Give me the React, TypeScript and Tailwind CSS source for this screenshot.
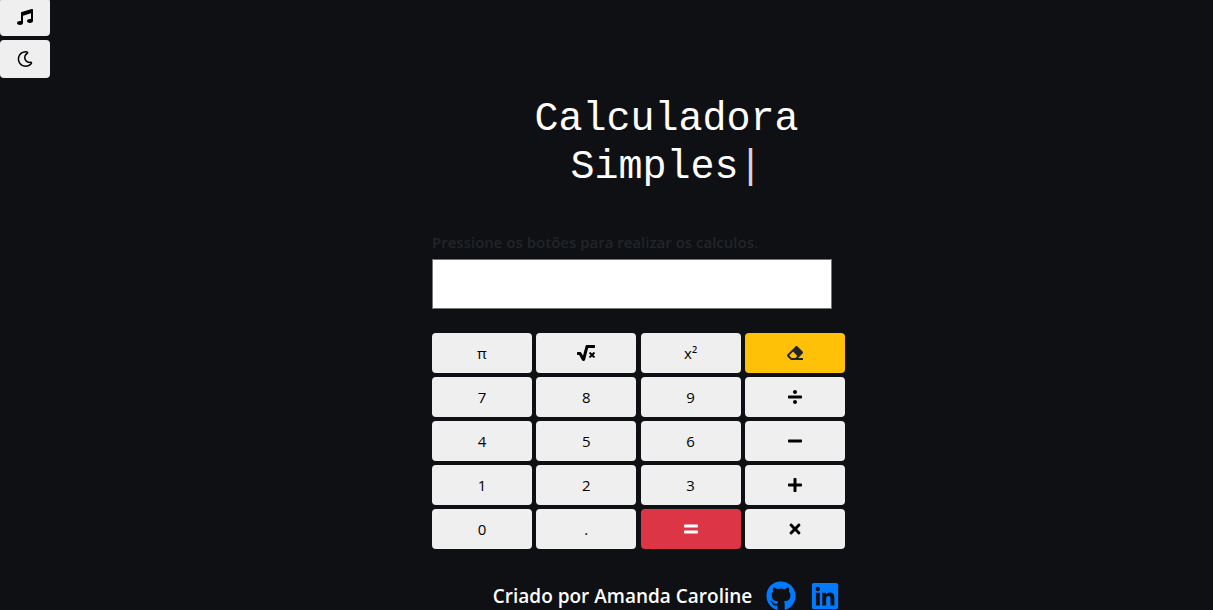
import React, { useState } from "react";
import type { ReactNode } from "react";
import {
  FaDivide,
  FaEquals,
  FaEraser,
  FaGithub,
  FaLinkedin,
  FaMinus,
  FaMusic,
  FaPlus,
  FaRegMoon,
  FaSquareRootAlt,
  FaTimes,
} from "react-icons/fa";

type Key = { id: string; label: string; face: ReactNode; tone?: "clear" | "equals" };

const keys: Key[] = [
  { id: "π", label: "Pi", face: "π" },
  { id: "√", label: "Raiz quadrada", face: <FaSquareRootAlt className="size-[18px]" /> },
  { id: "²", label: "Ao quadrado", face: "x²" },
  { id: "clear", label: "Limpar", face: <FaEraser className="size-4" />, tone: "clear" },
  { id: "7", label: "7", face: "7" },
  { id: "8", label: "8", face: "8" },
  { id: "9", label: "9", face: "9" },
  { id: "/", label: "Dividir", face: <FaDivide className="size-4" /> },
  { id: "4", label: "4", face: "4" },
  { id: "5", label: "5", face: "5" },
  { id: "6", label: "6", face: "6" },
  { id: "-", label: "Subtrair", face: <FaMinus className="size-4" /> },
  { id: "1", label: "1", face: "1" },
  { id: "2", label: "2", face: "2" },
  { id: "3", label: "3", face: "3" },
  { id: "+", label: "Somar", face: <FaPlus className="size-4" /> },
  { id: "0", label: "0", face: "0" },
  { id: ".", label: "Ponto", face: "." },
  { id: "=", label: "Igual", face: <FaEquals className="size-4" />, tone: "equals" },
  { id: "*", label: "Multiplicar", face: <FaTimes className="size-4" /> },
];

const tones = {
  plain: "bg-[#efefef] text-black",
  clear: "bg-[#ffc107] text-[#212529]",
  equals: "bg-[#dc3545] text-white",
};

function evaluate(expression: string): string {
  const parts = expression
    .replace(/π/g, String(Math.PI))
    .match(/\d+\.?\d*|\.\d+|[-+*/]/g);
  if (!parts) return "";
  const terms: number[] = [];
  let operator = "+";
  for (const part of parts) {
    if (/^[-+*/]$/.test(part)) {
      operator = part;
      continue;
    }
    const value = Number(part);
    if (operator === "+") terms.push(value);
    if (operator === "-") terms.push(-value);
    if (operator === "*") terms.push((terms.pop() ?? 0) * value);
    if (operator === "/") terms.push((terms.pop() ?? 0) / value);
  }
  return String(terms.reduce((sum, term) => sum + term, 0));
}

export default function App() {
  const [display, setDisplay] = useState("");

  function press(id: string) {
    if (id === "clear") setDisplay("");
    else if (id === "=") setDisplay(evaluate(display));
    else if (id === "√") setDisplay(String(Math.sqrt(Number(evaluate(display)))));
    else if (id === "²") setDisplay(String(Number(evaluate(display)) ** 2));
    else setDisplay(display + id);
  }

  return (
    <div className="relative h-screen overflow-hidden bg-[#0f1014] font-['Open_Sans',sans-serif]">
      <nav className="absolute top-0 left-0 flex flex-col gap-1">
        <button
          type="button"
          aria-label="Música"
          className="-mt-0.5 flex h-[38px] w-[50px] items-center justify-center rounded bg-[#efefef] text-base text-black"
        >
          <FaMusic />
        </button>
        <button
          type="button"
          aria-label="Tema escuro"
          className="flex h-[38px] w-[50px] items-center justify-center rounded bg-[#efefef] text-base text-black"
        >
          <FaRegMoon />
        </button>
      </nav>

      <main className="flex flex-col items-center pt-24 pl-16">
        <div className="w-[413px]">
          <h1 className="ml-14 text-center font-['Liberation_Mono',monospace] text-[40px] leading-12 text-white">
            Calculadora
            <br />
            Simples<span className="text-[#d4d4d4]">|</span>
          </h1>

          <label
            htmlFor="display"
            className="mt-[38px] block text-[15px] leading-6 font-semibold text-[#212529]"
          >
            Pressione os botões para realizar os calculos.
          </label>
          <input
            id="display"
            type="text"
            readOnly
            value={display}
            className="mt-[5px] block h-[50px] w-[400px] border border-[#767676] bg-white px-2 text-right text-xl text-black"
          />

          <div className="mt-6 grid grid-cols-[repeat(4,100px)] justify-between gap-y-1">
            {keys.map((key) => (
              <button
                key={key.id}
                type="button"
                aria-label={key.label}
                onClick={() => press(key.id)}
                className={`flex h-10 items-center justify-center rounded text-[15px] ${tones[key.tone ?? "plain"]}`}
              >
                {key.face}
              </button>
            ))}
          </div>

          <footer className="mt-8 ml-14 flex items-center justify-center gap-3.5 whitespace-nowrap">
            <p className="text-[19px] leading-7 font-semibold text-white">
              Criado por Amanda Caroline
            </p>
            <a href="https://github.com" aria-label="GitHub" className="text-3xl text-[#007bff]">
              <FaGithub />
            </a>
            <a href="https://linkedin.com" aria-label="LinkedIn" className="text-3xl text-[#007bff]">
              <FaLinkedin />
            </a>
          </footer>
        </div>
      </main>
    </div>
  );
}
